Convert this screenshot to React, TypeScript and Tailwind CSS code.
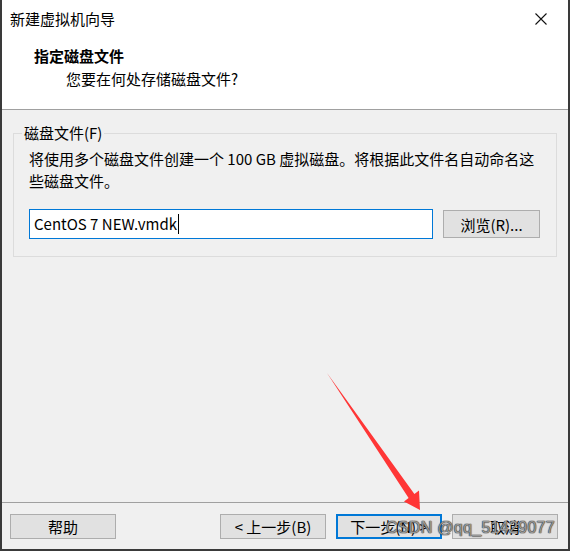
const ui = "font-['Microsoft_YaHei','Noto_Sans_CJK_SC',sans-serif]";

function Btn({
  label,
  focused,
  className = "",
}: {
  label: string;
  focused?: boolean;
  className?: string;
}) {
  return (
    <button
      className={`h-[25px] w-[106px] bg-[#e1e1e1] text-[15px] leading-none text-black ${
        focused ? "border-2 border-[#0078d7]" : "border border-[#adadad]"
      } ${className}`}
    >
      {label}
    </button>
  );
}

export default function App() {
  return (
    <div
      className={`relative flex h-[551px] w-[570px] flex-col overflow-hidden border-x-2 border-b-2 border-[#3a3a3a] bg-[#f0f0f0] text-black ${ui}`}
    >
      {/* title bar + header */}
      <div className="flex h-[110px] flex-col border-b border-[#a0a0a0] bg-white">
        <div className="flex h-[38px] items-center justify-between pl-[8px] pr-[14px]">
          <span className="text-[15px]">新建虚拟机向导</span>
          <svg width="12" height="12" viewBox="0 0 12 12" className="mr-[7px]">
            <path d="M0.5 0.5 L11.5 11.5 M11.5 0.5 L0.5 11.5" stroke="#111" strokeWidth="1.1" />
          </svg>
        </div>
        <div className="pl-[32px] pt-[8px] text-[15px] font-bold leading-[20px]">
          指定磁盘文件
        </div>
        <div className="pl-[64px] pt-[3px] text-[15px] leading-[20px]">
          您要在何处存储磁盘文件?
        </div>
      </div>

      {/* body */}
      <div className="flex-1 px-[11px] pt-[14px]">
        <fieldset className="h-[133px] border border-[#dcdcdc] px-[15px] pb-0 pt-0">
          <legend className="-ml-[7px] px-[2px] text-[15px] leading-[18px]">磁盘文件(F)</legend>
          <p className="mt-[6px] text-[15px] leading-[22px]">
            将使用多个磁盘文件创建一个 100 GB 虚拟磁盘。将根据此文件名自动命名这些磁盘文件。
          </p>
          <div className="mt-[17px] flex items-center gap-[10px]">
            <div className="flex h-[30px] w-[404px] items-center border border-[#0078d7] bg-white pl-[4px] text-[15px]">
              CentOS 7 NEW.vmdk
              <span className="ml-[1px] h-[20px] w-px bg-black" />
            </div>
            <button className="h-[28px] w-[97px] border border-[#adadad] bg-[#e1e1e1] text-[15px] leading-none">
              浏览(R)...
            </button>
          </div>
        </fieldset>
      </div>

      {/* footer */}
      <div className="flex h-[47px] items-start border-t border-[#a0a0a0] pl-[8px] pt-[11px]">
        <Btn label="帮助" />
        <Btn label="< 上一步(B)" className="ml-[104px]" />
        <Btn label="下一步(N) >" focused className="ml-[10px]" />
        <Btn label="取消" className="ml-[10px]" />
      </div>

      {/* overlays: arrow + watermark */}
      <svg
        className="pointer-events-none absolute left-0 top-0"
        width="570"
        height="551"
        viewBox="0 0 570 551"
      >
        <polygon
          points="325,373 412.4,494 417,490.5 418,510 402,501.5 406.6,498"
          fill="#ff3636"
        />
      </svg>
      <span className="pointer-events-none absolute left-[384px] top-[516px] whitespace-nowrap font-['Liberation_Sans',sans-serif] text-[16px] leading-[24px] tracking-[0.3px] text-[rgba(255,255,255,0.5)] [text-shadow:0_0_1px_#333,0_0_1px_#333,0_0_1px_#333]">
        CSDN @qq_51429077
      </span>
    </div>
  );
}
